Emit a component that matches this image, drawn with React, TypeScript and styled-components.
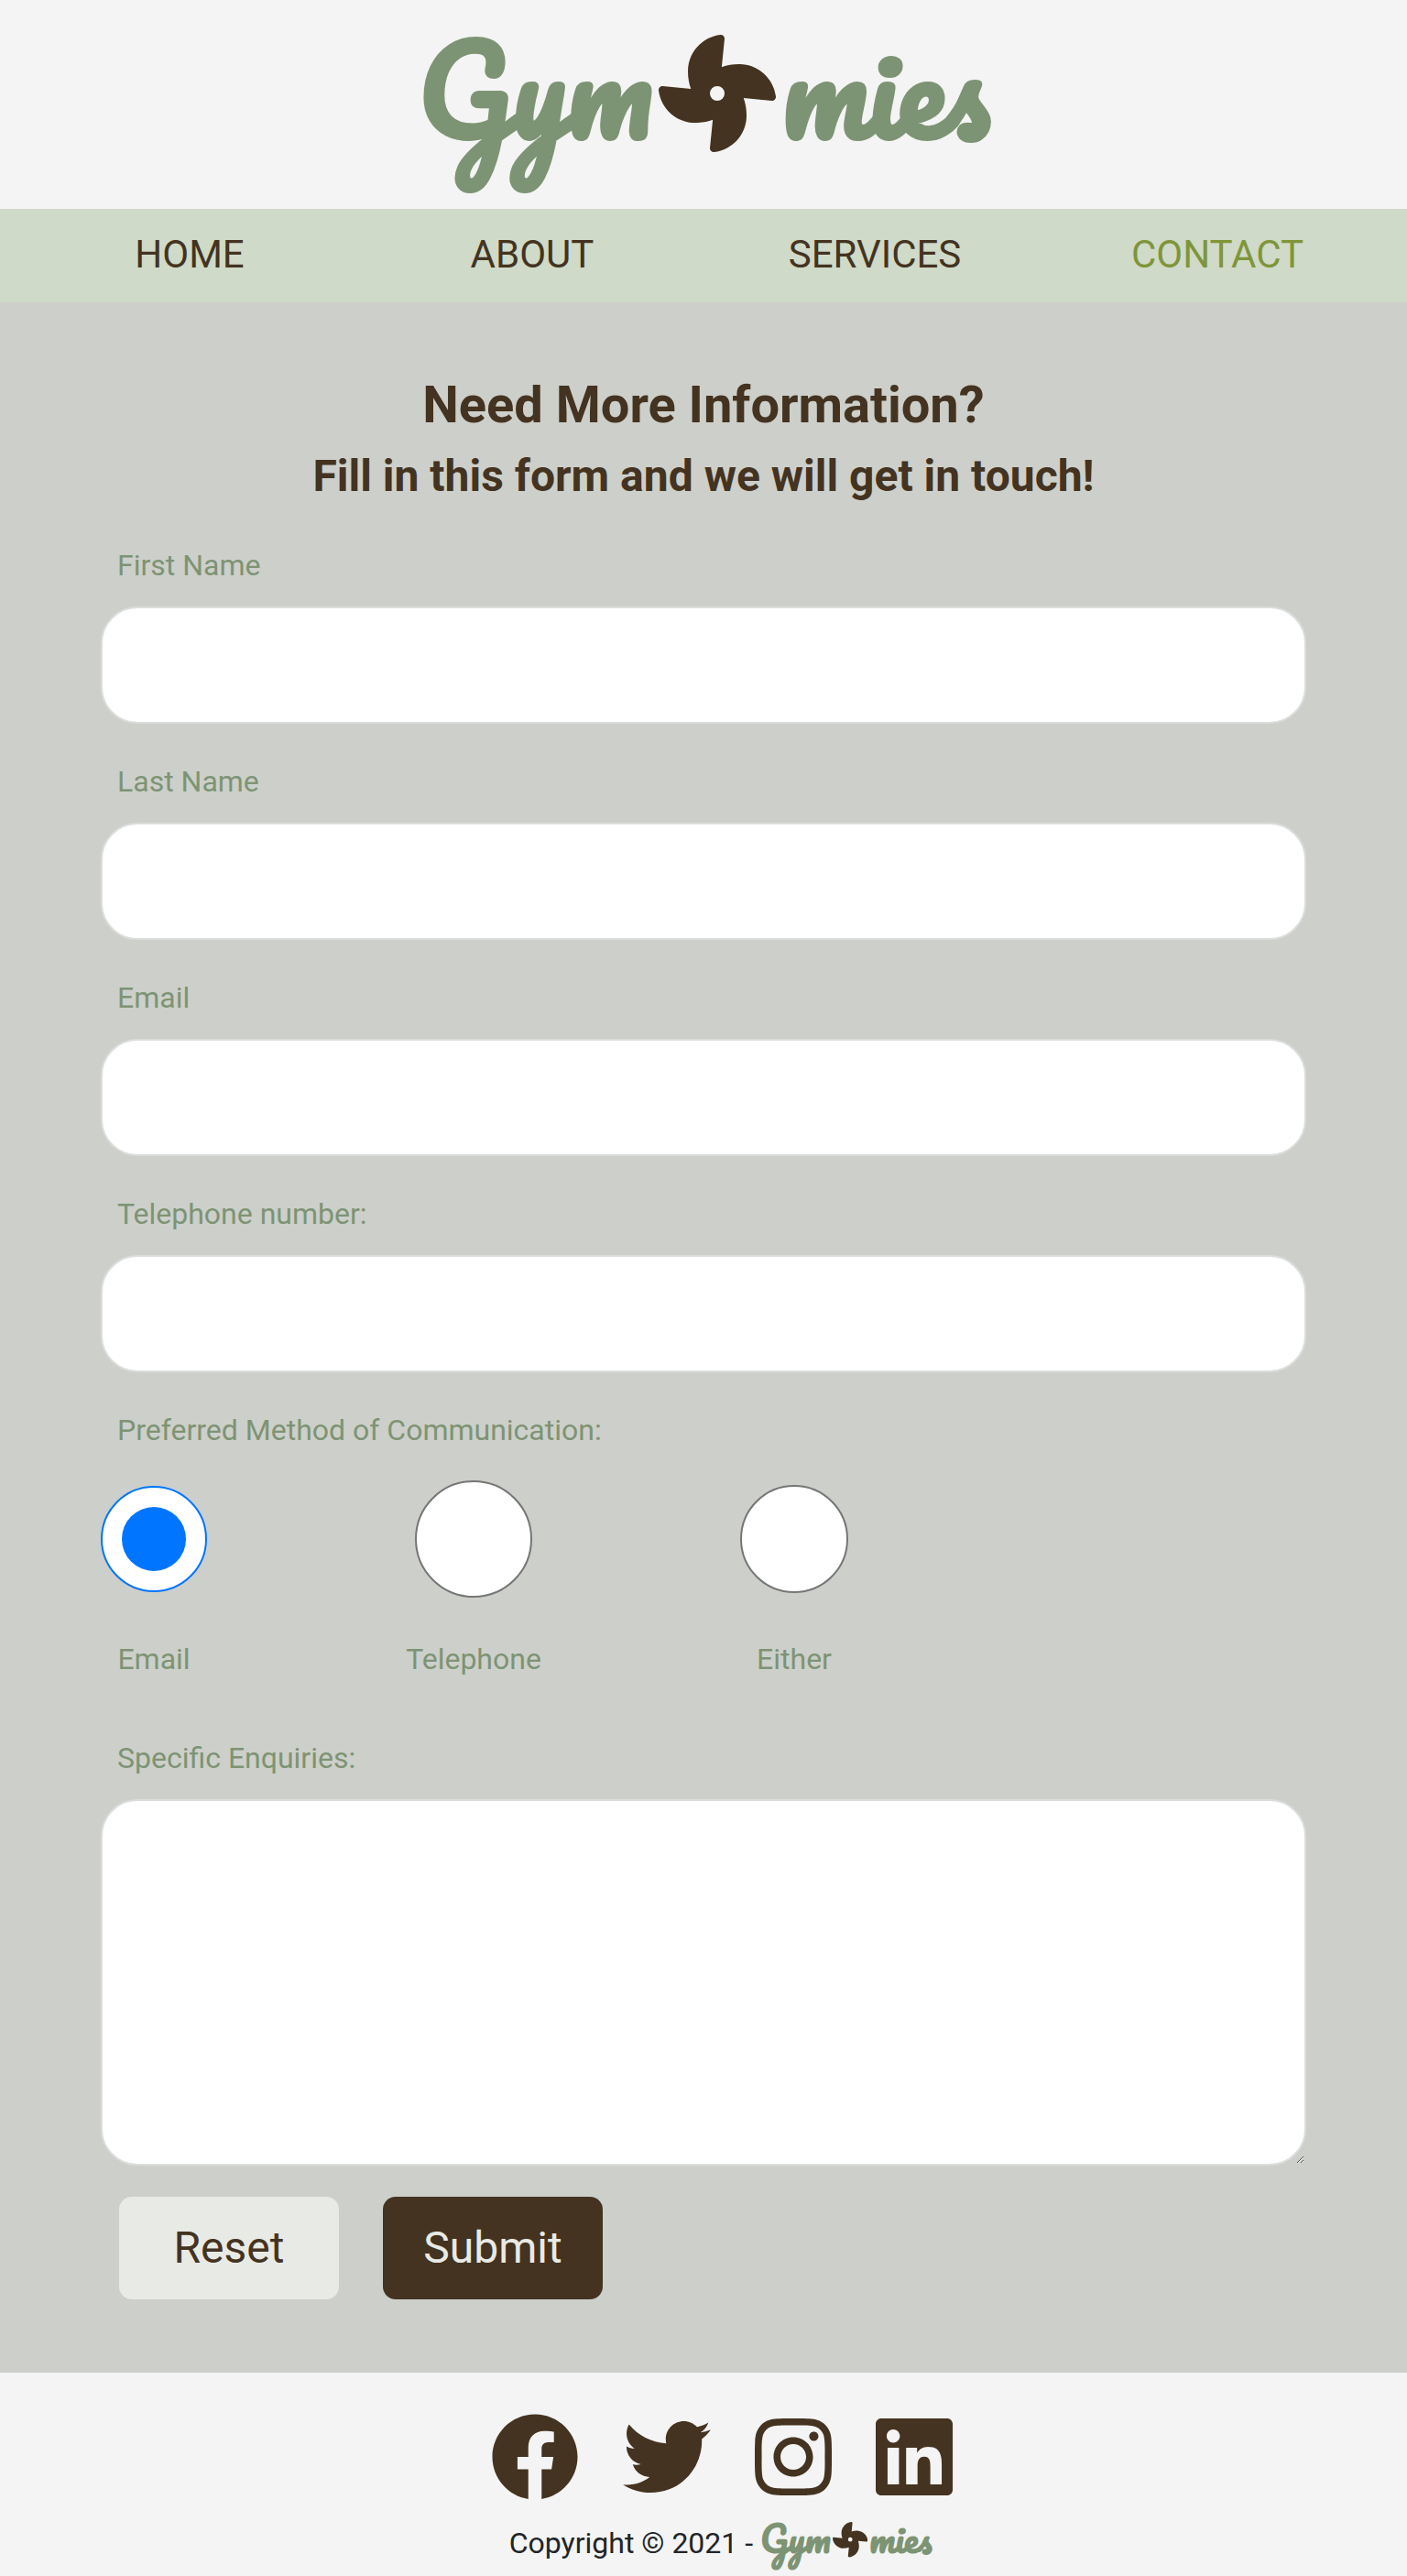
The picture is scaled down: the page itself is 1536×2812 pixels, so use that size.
import React from "react";
import styled, { createGlobalStyle } from "styled-components";
import { FaFacebook, FaFan, FaInstagram, FaLinkedin, FaTwitter } from "react-icons/fa";

const brown = "#443320";
const sage = "#7d9474";

const GlobalStyle = createGlobalStyle`
  *, *::before, *::after { box-sizing: border-box; }
  body {
    margin: 0;
    background: #f4f4f4;
    color: #212529;
    font: 400 32px/1.5 Roboto, "Liberation Sans", sans-serif;
  }
`;

const Page = styled.div`
  display: flex;
  flex-direction: column;
  min-height: 2812px;
`;

const Header = styled.header`
  display: flex;
  justify-content: center;
  height: 228px;
  padding: 20px 0 0 1px;
  background: #f4f4f4;
`;

const Brand = styled.div<{ $size: number }>`
  display: flex;
  color: ${sage};
  font-family: Pacifico, cursive;
  font-size: ${(p) => p.$size}px;
  font-weight: 700;
  line-height: 1.2;
  white-space: nowrap;

  svg {
    flex: none;
    width: 1em;
    height: 1em;
    margin: 0.14em 0.045em 0 0.055em;
    color: ${brown};
  }
`;

const Logo = ({ size }: { size: number }) => (
  <Brand $size={size}>
    <span>Gym</span>
    <FaFan />
    <span>mies</span>
  </Brand>
);

const Nav = styled.nav`
  display: grid;
  grid-template-columns: repeat(4, 1fr);
  height: 102px;
  padding: 16px 20px 0;
  background: #cfdac8;
`;

const NavLink = styled.a<{ $active?: boolean }>`
  color: ${(p) => (p.$active ? "#7f9539" : brown)};
  font-size: 42px;
  line-height: 68px;
  text-align: center;
`;

const Main = styled.main`
  height: 2260px;
  padding: 79px 110px 0;
  background: #cdcfca;
`;

const Title = styled.h2`
  margin: 0 0 15px;
  color: ${brown};
  font-size: 56px;
  font-weight: 700;
  line-height: 67px;
  text-align: center;
`;

const Subtitle = styled.h3`
  margin: 0 0 44px;
  color: ${brown};
  font-size: 48px;
  font-weight: 700;
  line-height: 58px;
  text-align: center;
`;

const Field = styled.div<{ $gap?: number }>`
  display: flex;
  flex-direction: column;
  margin-bottom: ${(p) => p.$gap ?? 39}px;
`;

const Label = styled.label<{ $gap?: number }>`
  height: 48px;
  margin: 0 0 ${(p) => p.$gap ?? 21}px 18px;
  color: ${sage};
`;

const Input = styled.input`
  width: 100%;
  height: 128px;
  padding: 12px 24px;
  border: 2px solid #dcdedc;
  border-radius: 40px;
  background: #fff;
  font: inherit;
  outline: none;
`;

const TextArea = styled.textarea`
  display: block;
  width: 100%;
  height: 400px;
  padding: 12px 24px;
  border: 2px solid #dcdedc;
  border-radius: 40px;
  background: #fff;
  font: inherit;
  outline: none;
  resize: vertical;
`;

const Choices = styled.div`
  display: flex;
  justify-content: space-between;
  width: 816px;
`;

const Choice = styled.div<{ $width: number }>`
  display: grid;
  grid-template-rows: 128px 48px;
  row-gap: 43px;
  place-items: center;
  width: ${(p) => p.$width}px;
`;

const ChoiceLabel = styled.label`
  color: ${sage};
`;

const Radio = styled.input<{ $size: number }>`
  display: grid;
  place-items: center;
  width: ${(p) => p.$size}px;
  height: ${(p) => p.$size}px;
  margin: 0;
  border: 2px solid #767676;
  border-radius: 50%;
  background: #fff;
  appearance: none;

  &:checked { border-color: #0075ff; }
  &:checked::before {
    width: 70px;
    height: 70px;
    border-radius: 50%;
    background: #0075ff;
    content: "";
  }
`;

const Actions = styled.div`
  display: flex;
  gap: 48px;
  padding-left: 20px;
`;

const Button = styled.button<{ $dark?: boolean }>`
  width: 240px;
  height: 112px;
  padding: 0;
  border: 0;
  border-radius: 14px;
  background: ${(p) => (p.$dark ? brown : "#e8eae5")};
  color: ${(p) => (p.$dark ? "#e8eae5" : brown)};
  font: inherit;
  font-size: 48px;
  line-height: 72px;
`;

const Footer = styled.footer`
  display: flex;
  flex-direction: column;
  align-items: center;
  height: 222px;
  padding-top: 44px;
  background: #f4f4f4;
`;

const Socials = styled.div`
  display: flex;
  gap: 48px;
  padding-left: 40px;
  color: ${brown};
`;

const SocialLink = styled.a<{ $width: number }>`
  display: flex;
  width: ${(p) => p.$width}px;
  height: 96px;

  svg { width: 100%; height: 100%; }
`;

const Copyright = styled.div`
  display: flex;
  gap: 8px;
  align-items: baseline;
  margin: 18px 0 0 37px;
  white-space: nowrap;
`;

const links = ["HOME", "ABOUT", "SERVICES", "CONTACT"];

const fields = [
  { id: "first", label: "First Name" },
  { id: "last", label: "Last Name" },
  { id: "email", label: "Email" },
  { id: "phone", label: "Telephone number:" },
];

const choices = [
  { id: "by-email", label: "Email", width: 116, size: 116 },
  { id: "by-phone", label: "Telephone", width: 164, size: 128 },
  { id: "by-either", label: "Either", width: 118, size: 118 },
];

export default function App() {
  return (
    <>
      <GlobalStyle />
      <Page>
        <Header>
          <Logo size={128} />
        </Header>
        <Nav>
          {links.map((name) => (
            <NavLink key={name} $active={name === "CONTACT"}>
              {name}
            </NavLink>
          ))}
        </Nav>
        <Main>
          <Title>Need More Information?</Title>
          <Subtitle>Fill in this form and we will get in touch!</Subtitle>
          {fields.map((f) => (
            <Field key={f.id}>
              <Label htmlFor={f.id}>{f.label}</Label>
              <Input id={f.id} />
            </Field>
          ))}
          <Field $gap={60}>
            <Label as="div" $gap={31}>
              Preferred Method of Communication:
            </Label>
            <Choices>
              {choices.map((c) => (
                <Choice key={c.id} $width={c.width}>
                  <Radio id={c.id} type="radio" name="method" $size={c.size} defaultChecked={c.id === "by-email"} />
                  <ChoiceLabel htmlFor={c.id}>{c.label}</ChoiceLabel>
                </Choice>
              ))}
            </Choices>
          </Field>
          <Field $gap={34}>
            <Label htmlFor="enquiries">Specific Enquiries:</Label>
            <TextArea id="enquiries" />
          </Field>
          <Actions>
            <Button type="reset">Reset</Button>
            <Button type="submit" $dark>
              Submit
            </Button>
          </Actions>
        </Main>
        <Footer>
          <Socials>
            <SocialLink $width={96}><FaFacebook /></SocialLink>
            <SocialLink $width={96}><FaTwitter /></SocialLink>
            <SocialLink $width={84}><FaInstagram /></SocialLink>
            <SocialLink $width={84}><FaLinkedin /></SocialLink>
          </Socials>
          <Copyright>
            <span>Copyright © 2021 -</span>
            <Logo size={38.4} />
          </Copyright>
        </Footer>
      </Page>
    </>
  );
}
